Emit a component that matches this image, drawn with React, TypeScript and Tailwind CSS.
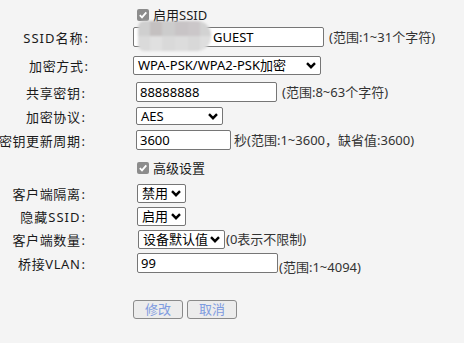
import React from "react";

const font = { fontFamily: '"Noto Sans", "Noto Sans CJK SC", sans-serif' };

function Chevron() {
  return (
    <svg width="10" height="7" viewBox="0 0 10 7" className="shrink-0">
      <path d="M1 1.2 L5 5.2 L9 1.2" fill="none" stroke="#000" strokeWidth="2.4" />
    </svg>
  );
}

function Check() {
  return (
    <span className="w-[12px] h-[12px] rounded-[2px] bg-[#8c8c8c] flex items-center justify-center shrink-0">
      <svg width="10" height="10" viewBox="0 0 10 10">
        <path d="M1.8 5.2 L4 7.4 L8.3 2.4" fill="none" stroke="#fff" strokeWidth="1.8" />
      </svg>
    </span>
  );
}

function Label({ text, w = "w-[88px]", wide = false }: { text: string; w?: string; wide?: boolean }) {
  return (
    <div
      className={`${w} shrink-0 flex justify-end whitespace-nowrap text-[#1a1a1a] pt-[2px] ${
        wide ? "tracking-[1px]" : "tracking-[0.6px]"
      }`}
    >
      <span>{text}</span>
      <span className="ml-[1px] tracking-normal">:</span>
    </div>
  );
}

function Sel({ w, text, h = "h-[19px]" }: { w: string; text: string; h?: string }) {
  return (
    <div className={`${w} ${h} shrink-0 border border-[#767676] rounded-[2px] bg-white flex items-center justify-between pl-[4px] pr-[4px] text-[#000] whitespace-nowrap`}>
      <span>{text}</span>
      <Chevron />
    </div>
  );
}

function Inp({ w, text, pl = "pl-[3px]" }: { w: string; text: string; pl?: string }) {
  return (
    <div className={`${w} h-[20px] shrink-0 border border-[#767676] rounded-[2px] bg-white flex items-center ${pl} text-[#000] whitespace-nowrap`}>
      {text}
    </div>
  );
}

export default function App() {
  return (
    <div className="w-[464px] h-[343px] bg-[#f4f4f4] text-[13px] leading-none overflow-hidden" style={font}>
      <div className="flex flex-col pt-[9px]">
        {/* 启用SSID */}
        <div className="h-[12px] flex items-center pl-[137px] gap-[4px] text-[#1a1a1a]">
          <Check />
          <span className="pt-[1px]">启用SSID</span>
        </div>

        {/* SSID名称 */}
        <div className="h-[20px] mt-[6px] flex items-center">
          <Label text="SSID名称" wide />
          <div className="ml-[45px] relative">
            <Inp w="w-[191px]" text="GUEST" pl="pl-[79px]" />
            <div className="absolute left-[5px] top-[-6px] w-[73px] h-[30px] rounded-r-[14px] rounded-l-[6px] overflow-hidden flex flex-col blur-[1px]">
              <div className="flex h-[15px]">
                <div className="w-[12px] bg-[#cfcfcf]" />
                <div className="w-[12px] bg-[#c4c0c0]" />
                <div className="w-[13px] bg-[#cccccc]" />
                <div className="w-[13px] bg-[#c8c4c6]" />
                <div className="w-[12px] bg-[#cbc7c9]" />
                <div className="w-[11px] bg-[#d2d2d2]" />
              </div>
              <div className="flex h-[15px]">
                <div className="w-[12px] bg-[#dadada]" />
                <div className="w-[12px] bg-[#e0e0e0]" />
                <div className="w-[13px] bg-[#d9d9d9]" />
                <div className="w-[13px] bg-[#dcdcdc]" />
                <div className="w-[12px] bg-[#d8d8d8]" />
                <div className="w-[11px] bg-[#dedede]" />
              </div>
            </div>
          </div>
          <span className="ml-[5px] text-[#333]">(范围:1~31个字符)</span>
        </div>

        {/* 加密方式 */}
        <div className="h-[19px] mt-[9px] flex items-center">
          <Label text="加密方式" />
          <div className="ml-[45px]">
            <Sel w="w-[188px]" text="WPA-PSK/WPA2-PSK加密" h="h-[19px]" />
          </div>
        </div>

        {/* 共享密钥 */}
        <div className="h-[20px] mt-[7px] flex items-center">
          <Label w="w-[85px]" text="共享密钥" />
          <div className="ml-[51px]">
            <Inp w="w-[141px]" text="88888888" />
          </div>
          <span className="ml-[5px] text-[#333]">(范围:8~63个字符)</span>
        </div>

        {/* 加密协议 */}
        <div className="h-[18px] mt-[5px] flex items-center">
          <Label w="w-[85px]" text="加密协议" />
          <div className="ml-[51px]">
            <Sel w="w-[87px]" text="AES" h="h-[18px]" />
          </div>
        </div>

        {/* 密钥更新周期 */}
        <div className="h-[20px] mt-[5px] flex items-center">
          <Label w="w-[85px]" text="密钥更新周期" />
          <div className="ml-[51px]">
            <Inp w="w-[95px]" text="3600" />
          </div>
          <span className="ml-[3px] text-[#333]">秒(范围:1~3600，缺省值:3600)</span>
        </div>

        {/* 高级设置 */}
        <div className="h-[12px] mt-[12px] flex items-center pl-[137px] gap-[4px] text-[#1a1a1a]">
          <Check />
          <span className="pt-[1px]">高级设置</span>
        </div>

        {/* 客户端隔离 */}
        <div className="h-[19px] mt-[10px] flex items-center">
          <Label w="w-[85px]" text="客户端隔离" />
          <div className="ml-[52px]">
            <Sel w="w-[49px]" text="禁用" />
          </div>
        </div>

        {/* 隐藏SSID */}
        <div className="h-[19px] mt-[4px] flex items-center">
          <Label w="w-[85px]" text="隐藏SSID" wide />
          <div className="ml-[52px]">
            <Sel w="w-[49px]" text="启用" />
          </div>
        </div>

        {/* 客户端数量 */}
        <div className="h-[19px] mt-[4px] flex items-center">
          <Label w="w-[85px]" text="客户端数量" />
          <div className="ml-[53px]">
            <Sel w="w-[87px]" text="设备默认值" />
          </div>
          <span className="ml-[1px] text-[#333]">(0表示不限制)</span>
        </div>

        {/* 桥接VLAN */}
        <div className="h-[20px] mt-[4px] flex items-center">
          <Label w="w-[85px]" text="桥接VLAN" />
          <div className="ml-[52px]">
            <Inp w="w-[141px]" text="99" />
          </div>
          <span className="ml-[1px] mt-[8px] text-[#333]">(范围:1~4094)</span>
        </div>

        {/* Buttons */}
        <div className="h-[19px] mt-[27px] flex pl-[133px] gap-[4px]">
          <div className="w-[50px] h-[19px] border border-[#8a8a8a] rounded-[3px] bg-[#ececec] text-[#7e9be0] flex items-center justify-center">修改</div>
          <div className="w-[50px] h-[19px] border border-[#8a8a8a] rounded-[3px] bg-[#ececec] text-[#7e9be0] flex items-center justify-center">取消</div>
        </div>
      </div>
    </div>
  );
}
